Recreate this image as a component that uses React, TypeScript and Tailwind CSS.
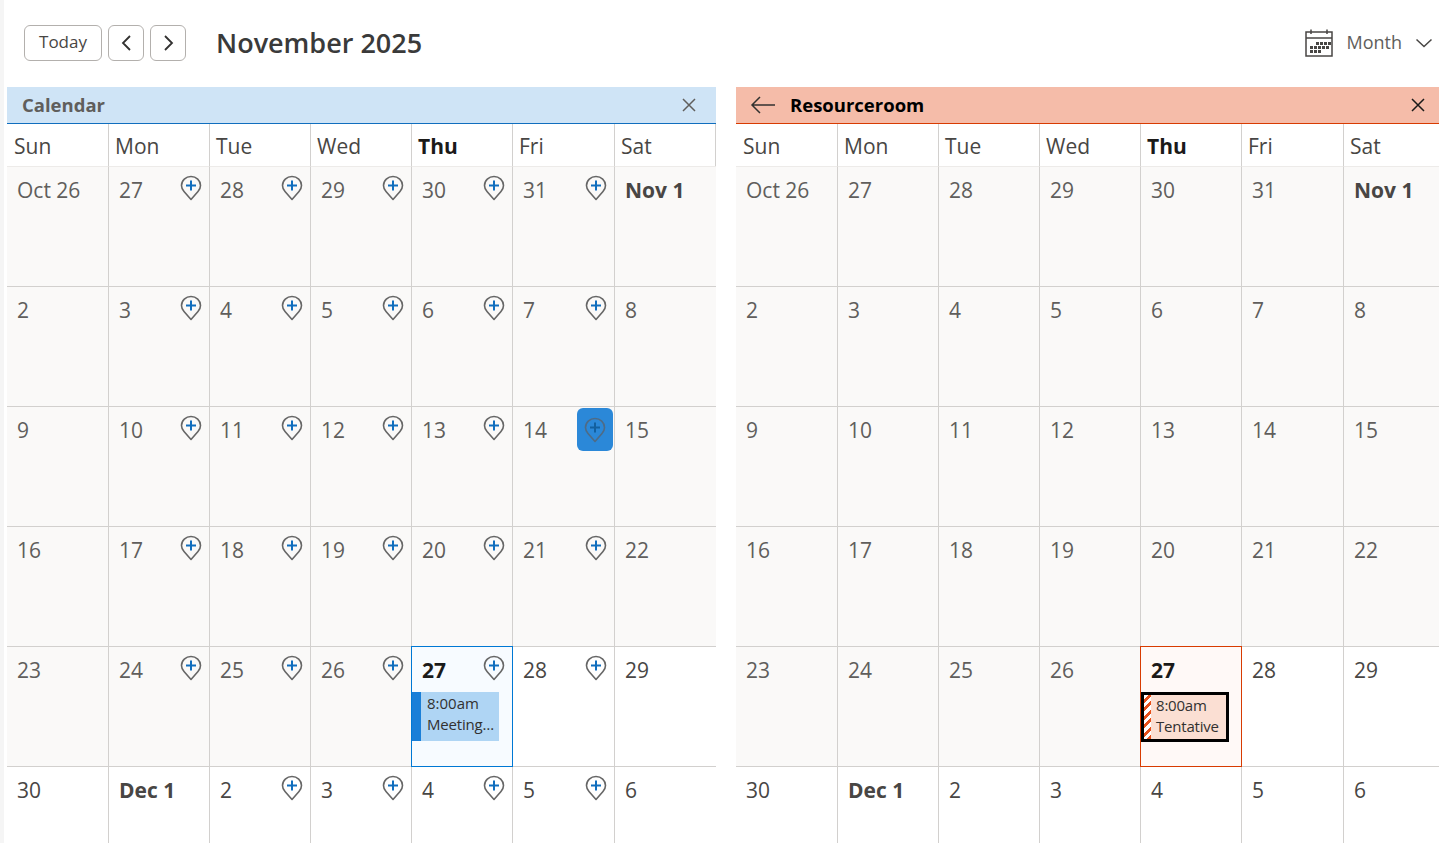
import { ReactNode } from "react";

const font = { fontFamily: '"Open Sans", "Noto Sans", sans-serif' };
const days = ["Sun", "Mon", "Tue", "Wed", "Thu", "Fri", "Sat"];

// grey = past days, white = today onwards
const weeks = [
  ["Oct 26", "27", "28", "29", "30", "31", "Nov 1"],
  ["2", "3", "4", "5", "6", "7", "8"],
  ["9", "10", "11", "12", "13", "14", "15"],
  ["16", "17", "18", "19", "20", "21", "22"],
  ["23", "24", "25", "26", "27", "28", "29"],
  ["30", "Dec 1", "2", "3", "4", "5", "6"],
];

function Pin({ active }: { active?: boolean }) {
  return (
    <svg width="22" height="26" viewBox="0 0 22 26" fill="none">
      <path
        d="M11 24.5 L4 16.5 C2.4 14.7 1.5 12.8 1.5 10.5 C1.5 5.3 5.8 1.5 11 1.5 C16.2 1.5 20.5 5.3 20.5 10.5 C20.5 12.8 19.6 14.7 18 16.5 Z"
        stroke={active ? "#4f6b85" : "#666666"}
        strokeWidth="1.6"
        strokeLinejoin="round"
      />
      <path d="M11 5.5 V15.5 M6 10.5 H16" stroke={active ? "#13609f" : "#106ebe"} strokeWidth="2" />
    </svg>
  );
}

function Event({ tentative }: { tentative?: boolean }) {
  if (tentative) {
    return (
      <div className="flex h-[50px] w-[88px] border-[3px] border-black bg-[#fbdfd3] text-[15px] leading-[21px] text-[#323130]">
        <div className="w-[7px] shrink-0 bg-[repeating-linear-gradient(135deg,#ffffff_0px,#ffffff_3px,#e8501a_3px,#e8501a_6px)]" />
        <div className="pl-[5px] tracking-[-0.2px]">
          <div>8:00am</div>
          <div>Tentative</div>
        </div>
      </div>
    );
  }
  return (
    <div className="flex h-[49px] w-[87px] bg-[#afd5f4] text-[15px] leading-[21px] text-[#323130]">
      <div className="w-[9px] shrink-0 bg-[#1a7fd8]" />
      <div className="pl-[6px] pt-px">
        <div>8:00am</div>
        <div className="tracking-[-0.2px]">Meeting…</div>
      </div>
    </div>
  );
}

function DayCell({
  label,
  row,
  col,
  pins,
  tone,
}: {
  label: string;
  row: number;
  col: number;
  pins: boolean;
  tone: "blue" | "red";
}) {
  const isToday = row === 4 && col === 4;
  const isPast = row < 4 || (row === 4 && col < 4);
  const isMonthStart = label.includes(" ") && label !== "Oct 26";
  const showPin = pins && col > 0 && col < 6 && !isMonthStart;
  const hovered = pins && row === 2 && col === 5;

  let cellClass = isPast ? "bg-[#faf9f8]" : "bg-white";
  if (isToday) {
    cellClass = tone === "blue" ? "bg-[#f7fbff] z-10" : "bg-[#fff9f7] z-10";
  }

  return (
    <div
      className={`relative h-[120px] border-t border-[#d2d0ce] ${col > 0 ? "border-l" : ""} ${
        row === 0 ? "border-t-[#edebe9]" : ""
      } ${cellClass}`}
    >
      {isToday && (
        <div
          className={`absolute -bottom-px -left-px -right-px -top-px border ${
            tone === "blue" ? "border-[#0078d4]" : "border-[#d83b01]"
          }`}
        />
      )}
      <div className="flex h-[40px] items-start justify-between pl-[10px] pr-[7px] pt-[8px]">
        <span
          className={`text-[21px] leading-[30px] ${
            isToday
              ? "font-bold text-[#1b1a19]"
              : isMonthStart
                ? "font-bold text-[#484644]"
                : isPast
                  ? "text-[#605e5c]"
                  : "text-[#484644]"
          }`}
        >
          {label}
        </span>
        {showPin && !hovered && (
          <span>
            <Pin />
          </span>
        )}
      </div>
      {hovered && (
        <div className="absolute right-[1px] top-[1px] flex h-[43px] w-[36px] items-center justify-center rounded-md bg-[#2b88d8]">
          <Pin active />
        </div>
      )}
      {isToday && (
        <div className="relative pt-[5px]">
          <Event tentative={tone === "red"} />
        </div>
      )}
    </div>
  );
}

function Panel({
  tone,
  title,
  pins,
  leading,
}: {
  tone: "blue" | "red";
  title: string;
  pins: boolean;
  leading?: ReactNode;
}) {
  const blue = tone === "blue";
  return (
    <div className="w-[709px] shrink-0">
      <div
        className={`flex h-[37px] items-center border-b-[1.5px] pr-[19px] text-[18.5px] font-bold ${
          blue
            ? "border-[#106ebe] bg-[#cfe4f6] pl-[15px] text-[#605e5c]"
            : "border-[#d83b01] bg-[#f5bca9] pl-[14px] text-black"
        }`}
      >
        {leading}
        <span className="flex-1">{title}</span>
        <svg width="16" height="16" viewBox="0 0 16 16" fill="none">
          <path d="M2 2 L14 14 M14 2 L2 14" stroke={blue ? "#605e5c" : "#1b1a19"} strokeWidth="1.5" />
        </svg>
      </div>
      <div className="grid h-[42px] grid-cols-[101px_101px_101px_101px_101px_102px_102px] border-r border-[#d2d0ce]">
        {days.map((d, i) => (
          <div
            key={d}
            className={`pt-[7px] text-[21px] leading-[30px] ${i > 0 ? "border-l border-[#d2d0ce] pl-[6px]" : "pl-[7px]"} ${
              d === "Thu" ? "font-bold text-[#1b1a19]" : "text-[#484644]"
            }`}
          >
            {d}
          </div>
        ))}
      </div>
      <div className="grid grid-cols-[101px_101px_101px_101px_101px_102px_102px] border-r border-[#d2d0ce]">
        {weeks.map((week, row) =>
          week.map((label, col) => (
            <DayCell key={`${row}-${col}`} label={label} row={row} col={col} pins={pins} tone={tone} />
          ))
        )}
      </div>
    </div>
  );
}

function MonthIcon() {
  const dots = [
    [11, 13], [15, 13], [19, 13], [23, 13],
    [5, 17], [9, 17], [13, 17], [17, 17], [21, 17],
    [5, 21], [9, 21], [13, 21],
  ];
  return (
    <svg width="28" height="28" viewBox="0 0 28 28" fill="none">
      <rect x="1" y="3" width="26" height="24" stroke="#484644" strokeWidth="1.5" />
      <path d="M1 9 H27 M6 0.5 V5 M22 0.5 V5" stroke="#484644" strokeWidth="1.5" />
      {dots.map(([x, y]) => (
        <rect key={`${x}-${y}`} x={x} y={y} width="3" height="3" fill="#484644" />
      ))}
    </svg>
  );
}

export default function App() {
  return (
    <div className="flex h-[843px] w-[1439px] overflow-hidden bg-white" style={font}>
      <div className="w-[4px] shrink-0 bg-[#f5f5f5]" />
      <div className="min-w-0 flex-1 pl-[3px]">
        {/* Top bar */}
        <div className="flex h-[87px] items-center pb-[1px] pl-[17px]">
          <button className="h-[36px] w-[78px] rounded-md border border-[#b3b0ad] pb-[2px] text-[17px] text-[#484644]">
            Today
          </button>
          <button className="ml-[6px] flex h-[36px] w-[36px] items-center justify-center rounded-md border border-[#b3b0ad]">
            <svg width="12" height="18" viewBox="0 0 12 18" fill="none">
              <path d="M10 2 L3 9 L10 16" stroke="#323130" strokeWidth="1.8" />
            </svg>
          </button>
          <button className="ml-[6px] flex h-[36px] w-[36px] items-center justify-center rounded-md border border-[#b3b0ad]">
            <svg className="ml-px" width="12" height="18" viewBox="0 0 12 18" fill="none">
              <path d="M2 2 L9 9 L2 16" stroke="#323130" strokeWidth="1.8" />
            </svg>
          </button>
          <h1 className="ml-[30px] flex-1 text-[27px] font-semibold text-[#3a3a3a]">November 2025</h1>
          <MonthIcon />
          <span className="ml-[13px] pb-[2px] text-[18px] text-[#605e5c]">Month</span>
          <svg className="ml-[13px] mr-[6px]" width="18" height="10" viewBox="0 0 18 10" fill="none">
            <path d="M1.5 1.5 L9 8.5 L16.5 1.5" stroke="#484644" strokeWidth="1.5" />
          </svg>
        </div>

        <div className="flex gap-[20px]">
          <Panel tone="blue" title="Calendar" pins />
          <Panel
            tone="red"
            title="Resourceroom"
            pins={false}
            leading={
              <svg className="mr-[14px]" width="26" height="18" viewBox="0 0 26 18" fill="none">
                <path d="M25 9 H2 M10 1 L2 9 L10 17" stroke="#323130" strokeWidth="1.5" />
              </svg>
            }
          />
        </div>
      </div>
    </div>
  );
}
